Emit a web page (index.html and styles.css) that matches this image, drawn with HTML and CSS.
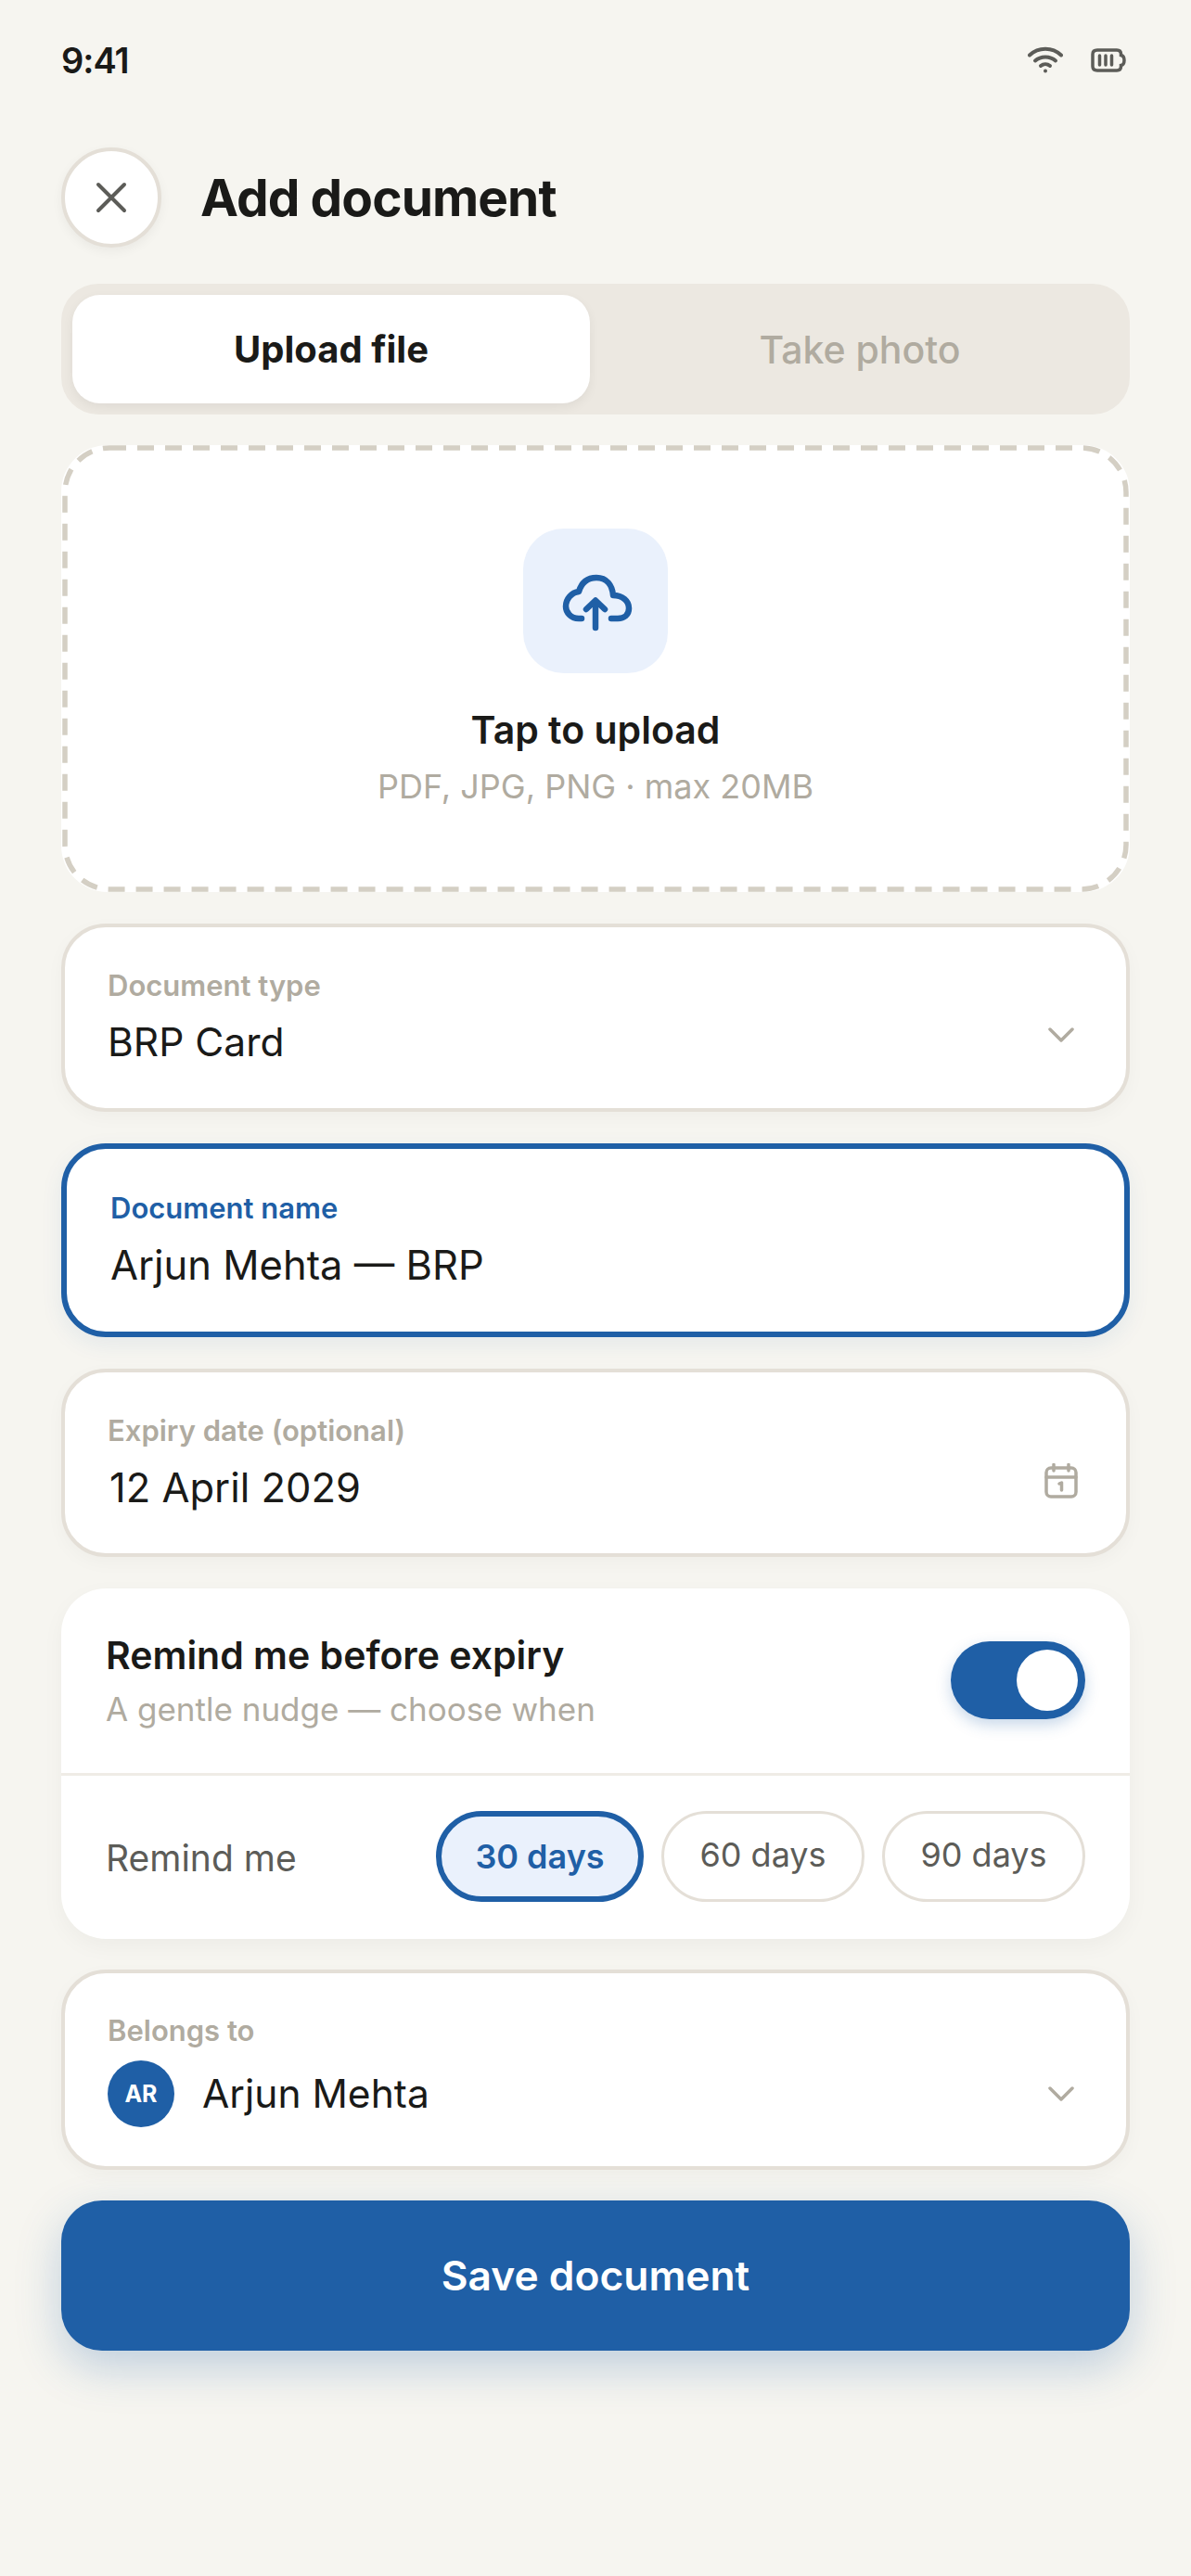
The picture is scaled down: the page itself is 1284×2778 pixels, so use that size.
FILE: index.html
```html
<!DOCTYPE html>
<html lang="en">
<head>
  <meta charset="UTF-8">
  <meta name="viewport" content="width=device-width, initial-scale=1.0">
  <title>Add document</title>
  <link rel="stylesheet" href="styles.css">
</head>
<body>
  <div class="screen">
    <div class="status-bar">
      <span class="time">9:41</span>
      <div class="status-icons">
        <svg width="38" height="30" viewBox="0 0 38 30" fill="none" stroke="#5c5c58" stroke-width="4" stroke-linecap="round">
          <path d="M2 9.500C11.500 0.500 26.500 0.500 36 9.500"/>
          <path d="M8 15.500C14 10 24 10 30 15.500"/>
          <path d="M14 21C17 18.500 21 18.500 24 21"/>
          <circle cx="19" cy="26.500" r="2" fill="#5c5c58" stroke="none"/>
        </svg>
        <svg width="38" height="26" viewBox="0 0 38 26" fill="none">
          <path d="M7 2H28C31 2 32.500 3.500 32.500 6.500V7.500C35 8 36 9.500 36 13C36 16.500 35 18 32.500 18.500V19.500C32.500 22.500 31 24 28 24H7C4 24 2 22.500 2 19.500V6.500C2 3.500 4 2 7 2Z" stroke="#5c5c58" stroke-width="3.500"/>
          <path d="M9.500 8V18M16 8V18M22.500 8V18" stroke="#5c5c58" stroke-width="3.500" stroke-linecap="round"/>
        </svg>
      </div>
    </div>

    <div class="header">
      <div class="close-btn">
        <svg width="36" height="36" viewBox="0 0 36 36" fill="none" stroke="#5c5c58" stroke-width="4" stroke-linecap="round">
          <path d="M4 4L32 32M32 4L4 32"/>
        </svg>
      </div>
      <h1>Add document</h1>
    </div>

    <div class="tabs">
      <div class="tab active">Upload file</div>
      <div class="tab">Take photo</div>
    </div>

    <div class="upload">
      <svg class="upload-border" viewBox="0 0 1150 482" fill="none">
        <rect x="3" y="3" width="1144" height="476" rx="48" stroke="#d4cfc4" stroke-width="5.500" stroke-dasharray="18 12"/>
      </svg>
      <div class="upload-icon">
        <svg width="80" height="70" viewBox="0 0 80 70" fill="none" stroke="#1f5fa6" stroke-width="6.500" stroke-linecap="round" stroke-linejoin="round">
          <path d="M25 54H22C13 54 8 47 8 41C8 33 14 26 22 25C25 15 32 10 41 10C52 10 58 18 59 29C69 29 76 35 76 43C76 50 71 54 64 54H57"/>
          <path d="M40 64V35M30 44L40 34.500L50 44"/>
        </svg>
      </div>
      <div class="upload-title">Tap to upload</div>
      <div class="upload-sub">PDF, JPG, PNG · max 20MB</div>
    </div>

    <div class="field">
      <div class="field-text">
        <div class="field-label">Document type</div>
        <div class="field-value">BRP Card</div>
      </div>
      <svg class="chevron" width="28" height="18" viewBox="0 0 28 18" fill="none" stroke="#b0aba0" stroke-width="3.500" stroke-linecap="round" stroke-linejoin="round">
        <path d="M2 3L14 15L26 3"/>
      </svg>
    </div>

    <div class="field focused">
      <div class="field-text">
        <div class="field-label">Document name</div>
        <div class="field-value">Arjun Mehta — BRP</div>
      </div>
    </div>

    <div class="field">
      <div class="field-text">
        <div class="field-label">Expiry date (optional)</div>
        <div class="field-value date">12 April 2029</div>
      </div>
      <svg class="calendar" width="36" height="38" viewBox="0 0 36 38" fill="none" stroke="#b0aba0" stroke-width="3.500" stroke-linecap="round" stroke-linejoin="round">
        <rect x="2" y="5" width="32" height="31" rx="5"/>
        <path d="M2 15H34M10 1.500V8M26 1.500V8"/>
        <path d="M16 22L18.500 21V29"/>
      </svg>
    </div>

    <div class="reminder">
      <div class="reminder-top">
        <div>
          <div class="reminder-title">Remind me before expiry</div>
          <div class="reminder-sub">A gentle nudge — choose when</div>
        </div>
        <div class="toggle"><div class="knob"></div></div>
      </div>
      <div class="reminder-bottom">
        <span class="reminder-label">Remind me</span>
        <div class="chips">
          <div class="chip active">30 days</div>
          <div class="chip">60 days</div>
          <div class="chip">90 days</div>
        </div>
      </div>
    </div>

    <div class="field owner">
      <div class="field-text">
        <div class="field-label">Belongs to</div>
        <div class="owner-row">
          <div class="avatar">AR</div>
          <div class="field-value">Arjun Mehta</div>
        </div>
      </div>
      <svg class="chevron" width="28" height="18" viewBox="0 0 28 18" fill="none" stroke="#b0aba0" stroke-width="3.500" stroke-linecap="round" stroke-linejoin="round">
        <path d="M2 3L14 15L26 3"/>
      </svg>
    </div>

    <button class="save-btn">Save document</button>
  </div>
</body>
</html>
```

FILE: styles.css
```css
:root {
  --bg: #f6f5f0;
  --text: #1a1a18;
  --muted: #b0aba0;
  --blue: #1f5fa6;
  --blue-soft: #eaf1fc;
  --border: #e4dfd7;
}

* {
  box-sizing: border-box;
}

body {
  margin: 0;
  background-color: var(--bg);
  color: var(--text);
  font-family: 'Inter', sans-serif;
}

.screen {
  width: 1284px;
  height: 2778px;
  padding: 0 66px;
  display: flex;
  flex-direction: column;
}

.status-bar {
  height: 130px;
  display: flex;
  align-items: center;
  justify-content: space-between;
}

.time {
  font-size: 38px;
  font-weight: 600;
  letter-spacing: -1px;
}

.status-icons {
  display: flex;
  align-items: center;
  gap: 30px;
  margin-right: 4px;
}

.header {
  height: 108px;
  margin-top: 29px;
  display: flex;
  align-items: center;
  gap: 42px;
}

.close-btn {
  width: 108px;
  height: 108px;
  border-radius: 50%;
  background-color: #fff;
  border: 4px solid var(--border);
  box-shadow: 0 4px 12px rgba(0, 0, 0, 0.05);
  display: flex;
  align-items: center;
  justify-content: center;
}

h1 {
  margin: 0;
  font-size: 55px;
  font-weight: 700;
  letter-spacing: -0.9px;
}

.tabs {
  height: 141px;
  margin-top: 39px;
  padding: 12px;
  background-color: #ece8e1;
  border-radius: 40px;
  display: flex;
}

.tab {
  flex: 1;
  padding-left: 12px;
  display: flex;
  align-items: center;
  justify-content: center;
  font-size: 41px;
  font-weight: 500;
  color: var(--muted);
  border-radius: 30px;
}

.tab.active {
  flex: 0 0 558px;
  padding-left: 0;
  background-color: #fff;
  color: var(--text);
  font-size: 40px;
  font-weight: 700;
  box-shadow: 0 4px 12px rgba(0, 0, 0, 0.06);
}

.upload {
  position: relative;
  height: 482px;
  margin-top: 33px;
  background-color: #fff;
  border-radius: 50px;
  display: flex;
  flex-direction: column;
  align-items: center;
  padding-top: 90px;
}

.upload-border {
  position: absolute;
  top: 0;
  left: 0;
  width: 100%;
  height: 100%;
}

.upload-icon {
  width: 156px;
  height: 156px;
  border-radius: 44px;
  background-color: var(--blue-soft);
  display: flex;
  align-items: center;
  justify-content: center;
}

.upload-title {
  margin-top: 36px;
  font-size: 41px;
  font-weight: 600;
}

.upload-sub {
  margin-top: 14px;
  font-size: 36px;
  color: var(--muted);
}

.field {
  height: 203px;
  margin-top: 34px;
  padding: 0 48px 0 46px;
  background-color: #fff;
  border: 4px solid var(--border);
  border-radius: 48px;
  box-shadow: 0 6px 20px rgba(0, 0, 0, 0.03);
  display: flex;
  align-items: center;
  justify-content: space-between;
}

.field-text {
  display: flex;
  flex-direction: column;
  gap: 16px;
}

.field-label {
  font-size: 31px;
  font-weight: 600;
  color: var(--muted);
}

.field-value {
  font-size: 42.500px;
  line-height: 54px;
}

.field-value.date {
  font-size: 43.500px;
  margin-left: 2px;
}

.chevron {
  margin-top: 36px;
  margin-right: 8px;
}

.calendar {
  margin-top: 39px;
  margin-right: 4px;
}

.field.focused {
  height: 209px;
  padding-left: 47px;
  border: 6px solid var(--blue);
  box-shadow: 0 8px 24px rgba(31, 95, 166, 0.08);
}

.field.focused .field-value {
  font-size: 43.500px;
}

.field.focused .field-label {
  color: var(--blue);
}

.reminder {
  height: 378px;
  margin-top: 34px;
  background-color: #fff;
  border-radius: 48px;
  box-shadow: 0 8px 24px rgba(0, 0, 0, 0.04);
  display: flex;
  flex-direction: column;
}

.reminder-top {
  height: 202px;
  padding: 0 48px 2px;
  border-bottom: 3px solid #efece6;
  display: flex;
  align-items: center;
  justify-content: space-between;
}

.reminder-title {
  font-size: 41px;
  font-weight: 600;
}

.reminder-sub {
  margin-top: 12px;
  font-size: 35px;
  color: var(--muted);
}

.toggle {
  width: 145px;
  height: 84px;
  padding: 9px 8px;
  background-color: var(--blue);
  border-radius: 42px;
  box-shadow: 0 6px 16px rgba(31, 95, 166, 0.25);
  display: flex;
  justify-content: flex-end;
}

.knob {
  width: 66px;
  height: 66px;
  border-radius: 50%;
  background-color: #fff;
}

.reminder-bottom {
  flex: 1;
  padding: 0 48px 2px;
  display: flex;
  align-items: center;
  justify-content: space-between;
}

.reminder-label {
  margin-top: 3px;
  font-size: 39px;
  color: #5c5c58;
}

.chips {
  display: flex;
  gap: 19px;
}

.chip {
  width: 219px;
  height: 98px;
  padding-bottom: 4px;
  border: 3px solid var(--border);
  border-radius: 49px;
  display: flex;
  align-items: center;
  justify-content: center;
  font-size: 36px;
  color: #5c5c58;
}

.chip.active {
  width: 224px;
  padding-bottom: 0;
  border: 6px solid var(--blue);
  background-color: var(--blue-soft);
  color: var(--blue);
  font-weight: 600;
}

.field.owner {
  height: 216px;
  margin-top: 33px;
}

.field.owner .field-text {
  gap: 14px;
}

.field.owner .chevron {
  margin-top: 52px;
}

.owner-row {
  display: flex;
  align-items: center;
  gap: 30px;
}

.avatar {
  width: 72px;
  height: 72px;
  border-radius: 50%;
  background-color: var(--blue);
  color: #fff;
  font-size: 25px;
  font-weight: 700;
  display: flex;
  align-items: center;
  justify-content: center;
}

.save-btn {
  height: 162px;
  margin-top: 33px;
  border: none;
  border-radius: 44px;
  background-color: var(--blue);
  color: #fff;
  font-family: inherit;
  font-size: 44.300px;
  font-weight: 600;
  box-shadow: 0 18px 48px rgba(31, 95, 166, 0.25);
}
```
